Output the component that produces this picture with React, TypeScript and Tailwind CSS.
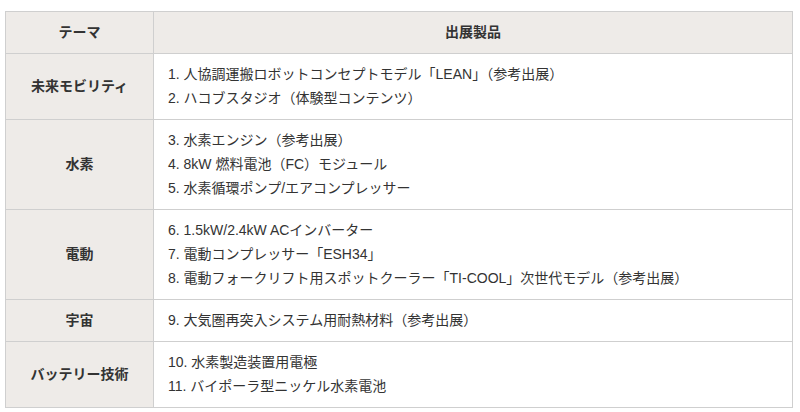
const rows = [
  {
    theme: "未来モビリティ",
    items: [
      "1. 人協調運搬ロボットコンセプトモデル「LEAN」（参考出展）",
      "2. ハコブスタジオ（体験型コンテンツ）",
    ],
  },
  {
    theme: "水素",
    items: [
      "3. 水素エンジン（参考出展）",
      "4. 8kW 燃料電池（FC）モジュール",
      "5. 水素循環ポンプ/エアコンプレッサー",
    ],
  },
  {
    theme: "電動",
    items: [
      "6. 1.5kW/2.4kW ACインバーター",
      "7. 電動コンプレッサー「ESH34」",
      "8. 電動フォークリフト用スポットクーラー「TI-COOL」次世代モデル（参考出展）",
    ],
  },
  {
    theme: "宇宙",
    items: ["9. 大気圏再突入システム用耐熱材料（参考出展）"],
  },
  {
    theme: "バッテリー技術",
    items: ["10. 水素製造装置用電極", "11. バイポーラ型ニッケル水素電池"],
  },
];

const App = () => {
  return (
    <div
      className="min-h-screen bg-white pt-[11px] pl-[5px] text-[14px] text-[#333]"
      style={{ fontFamily: '"Liberation Sans", "Noto Sans CJK JP", sans-serif' }}
    >
      <table className="w-[788px] border-collapse border border-[#cfcfcf] leading-6">
        <thead>
          <tr className="bg-[#eeebe8]">
            <th className="w-[148px] border border-[#cfcfcf] pt-2 pb-[9px] text-center font-bold">
              <div className="h-6 overflow-visible">テーマ</div>
            </th>
            <th className="border border-[#cfcfcf] pt-2 pb-[9px] text-center font-bold">
              <div className="h-6 overflow-visible">出展製品</div>
            </th>
          </tr>
        </thead>
        <tbody>
          {rows.map((row) => (
            <tr key={row.theme}>
              <td className="border border-[#cfcfcf] bg-[#eeebe8] pt-2 pb-[9px] text-center align-middle font-bold">
                <div className="h-6 overflow-visible">{row.theme}</div>
              </td>
              <td className="border border-[#cfcfcf] bg-white pt-2 pb-[9px] pl-[14px] pr-3">
                {row.items.map((item) => (
                  <div key={item} className="h-6 overflow-visible">
                    {item}
                  </div>
                ))}
              </td>
            </tr>
          ))}
        </tbody>
      </table>
    </div>
  );
};

export default App;
